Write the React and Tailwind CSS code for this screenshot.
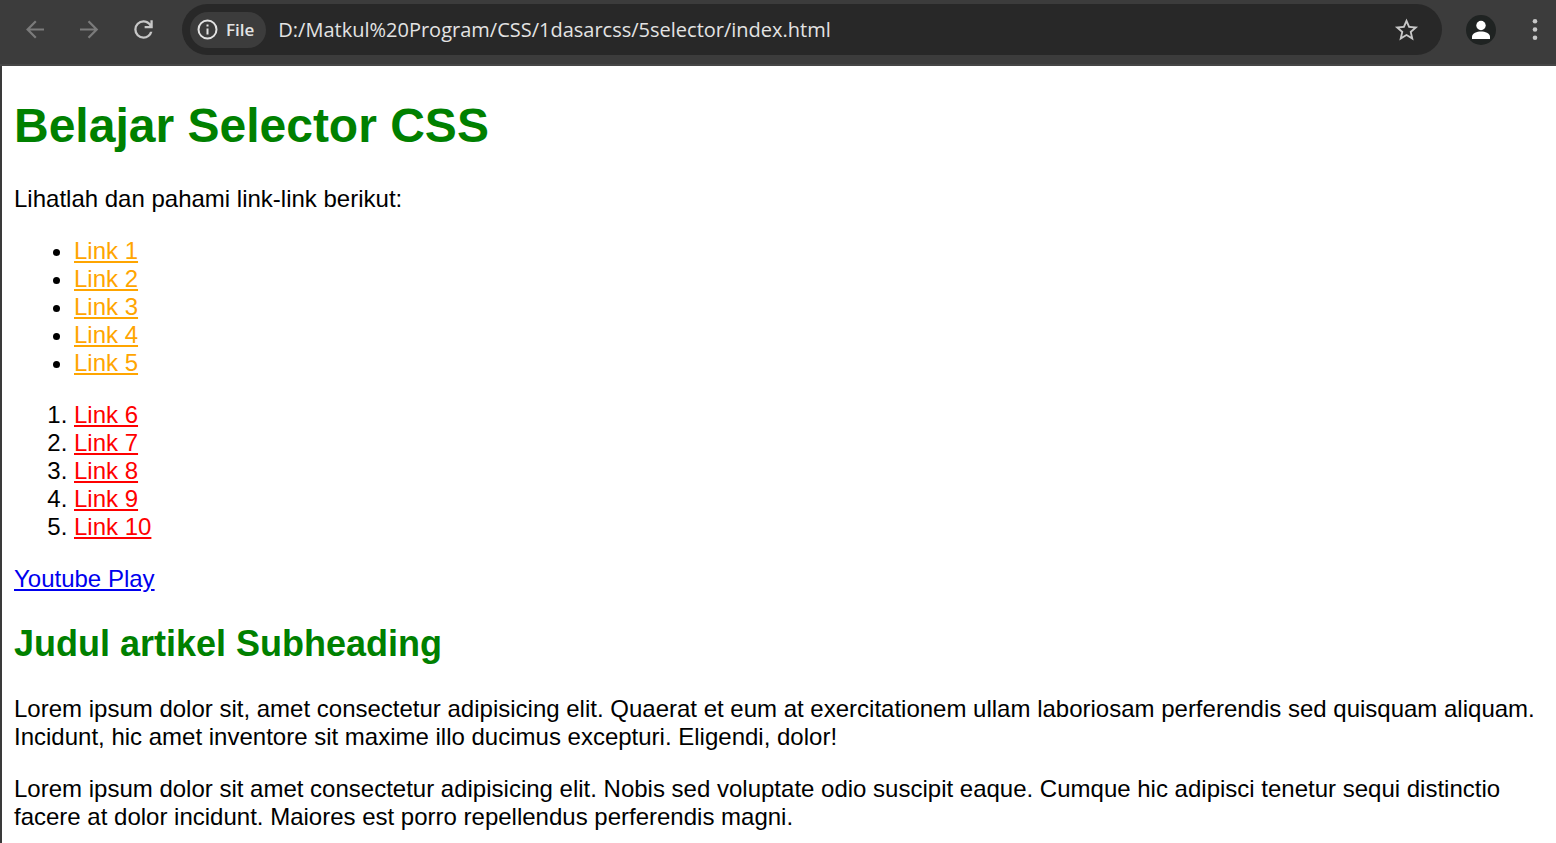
const orangeLinks = ["Link 1", "Link 2", "Link 3", "Link 4", "Link 5"];
const redLinks = ["Link 6", "Link 7", "Link 8", "Link 9", "Link 10"];

function Icon({ children, viewBox = "0 0 25 25" }) {
  return (
    <svg
      viewBox={viewBox}
      fill="none"
      stroke="currentColor"
      strokeWidth="2"
      aria-hidden="true"
      className="block size-[25px]"
    >
      {children}
    </svg>
  );
}

function Toolbar() {
  return (
    <header className="flex items-center border-b-2 border-[#464646] bg-[#3c3c3c] pt-1 pr-2 pb-[9px] pl-[23px] font-['Open_Sans','Noto_Sans',sans-serif]">
      <nav className="flex gap-[29px]" aria-label="Browser navigation">
        <button type="button" aria-label="Back" className="text-[#7b7b7b]">
          <Icon>
            <path d="M21 12.500H4.600M12.800 4.200 4.600 12.500l8.200 8.300" strokeWidth="2.200" />
          </Icon>
        </button>
        <button type="button" aria-label="Forward" className="text-[#7b7b7b]">
          <Icon>
            <path d="M3 12.500h16.400M11.500 4.200l8.200 8.300-8.200 8.300" strokeWidth="2.200" />
          </Icon>
        </button>
        <button type="button" aria-label="Reload" className="text-[#c7c7c7]">
          <Icon viewBox="48 -912 865 865">
            <path
              fill="currentColor"
              stroke="none"
              d="M480-160q-134 0-227-93t-93-227q0-134 93-227t227-93q69 0 132 28.500T720-690v-110h80v280H520v-80h168q-32-56-87.500-88T480-720q-100 0-170 70t-70 170q0 100 70 170t170 70q77 0 139-44t87-116h84q-28 106-114 173t-192 67Z"
            />
          </Icon>
        </button>
      </nav>

      <div className="mr-6 ml-[26px] flex h-[51px] min-w-0 flex-1 items-center rounded-full bg-[#282828] pr-[23px] pl-2">
        <button
          type="button"
          className="flex h-9 items-center gap-[6px] rounded-full bg-[#3c3c3c] pr-3 pl-[5px] text-[17px] leading-6 font-semibold text-[#e3e3e3]"
        >
          <Icon>
            <circle cx="12.5" cy="12.5" r="9" />
            <path d="M12.5 11.5v6M12.5 7.5v2" />
          </Icon>
          File
        </button>
        <input
          type="text"
          aria-label="Address"
          defaultValue="D:/Matkul%20Program/CSS/1dasarcss/5selector/index.html"
          className="ml-3 h-8 min-w-0 flex-1 bg-transparent text-[20px] text-[#e3e3e3] outline-none"
        />
        <button type="button" aria-label="Bookmark this page" className="text-[#c7c7c7]">
          <Icon viewBox="1.2 0.800 21.600 21.600">
            <path
              fill="currentColor"
              stroke="none"
              d="M22 9.240l-7.190-.620L12 2 9.190 8.630 2 9.240l5.460 4.730L5.820 21 12 17.270 18.180 21l-1.630-7.030L22 9.240zM12 15.400l-3.760 2.270 1-4.280-3.320-2.880 4.380-.380L12 6.100l1.710 4.040 4.380.380-3.320 2.880 1 4.280L12 15.400z"
            />
          </Icon>
        </button>
      </div>

      <button
        type="button"
        aria-label="Profile"
        className="flex size-[30px] items-center justify-center rounded-full bg-[#1f2322] text-white"
      >
        <svg viewBox="0 0 30 30" fill="currentColor" aria-hidden="true" className="size-[30px]">
          <circle cx="15" cy="10.500" r="4.700" />
          <path d="M6 24v-2.300c0-3.500 5-5.200 9-5.200s9 1.700 9 5.200V24z" />
        </svg>
      </button>
      <button type="button" aria-label="Menu" className="ml-[27px] text-[#c7c7c7]">
        <Icon>
          <g fill="currentColor" stroke="none">
            <circle cx="12" cy="4.200" r="2.300" />
            <circle cx="12" cy="12.5" r="2.300" />
            <circle cx="12" cy="20.800" r="2.300" />
          </g>
        </Icon>
      </button>
    </header>
  );
}

export default function App() {
  return (
    <div className="min-h-screen bg-white">
      <Toolbar />
      <main className="border-l-2 border-[#3a3a3a] px-3 pt-8 pb-3 font-['Liberation_Sans',Arial,sans-serif] text-[24px] leading-7 text-black">
        <h1 className="mb-8 text-[48px] leading-[55px] font-bold text-[#008000]">
          Belajar Selector CSS
        </h1>
        <p className="mb-6">Lihatlah dan pahami link-link berikut:</p>
        <ul className="mb-6 list-disc pl-[60px]">
          {orangeLinks.map((label) => (
            <li key={label}>
              <a href="#" className="text-[#ffa500] underline">
                {label}
              </a>
            </li>
          ))}
        </ul>
        <ol className="mb-6 list-decimal pl-[60px]">
          {redLinks.map((label) => (
            <li key={label}>
              <a href="#" className="text-[#ff0000] underline">
                {label}
              </a>
            </li>
          ))}
        </ol>
        <a href="#" className="text-[#0000ee] underline">
          Youtube Play
        </a>
        <h2 className="my-[30px] text-[36px] leading-[42px] font-bold text-[#008000]">
          Judul artikel Subheading
        </h2>
        <p className="mb-6">
          Lorem ipsum dolor sit, amet consectetur adipisicing elit. Quaerat et eum at exercitationem
          ullam laboriosam perferendis sed quisquam aliquam. Incidunt, hic amet inventore sit maxime
          illo ducimus excepturi. Eligendi, dolor!
        </p>
        <p>
          Lorem ipsum dolor sit amet consectetur adipisicing elit. Nobis sed voluptate odio suscipit
          eaque. Cumque hic adipisci tenetur sequi distinctio facere at dolor incidunt. Maiores est
          porro repellendus perferendis magni.
        </p>
      </main>
    </div>
  );
}
